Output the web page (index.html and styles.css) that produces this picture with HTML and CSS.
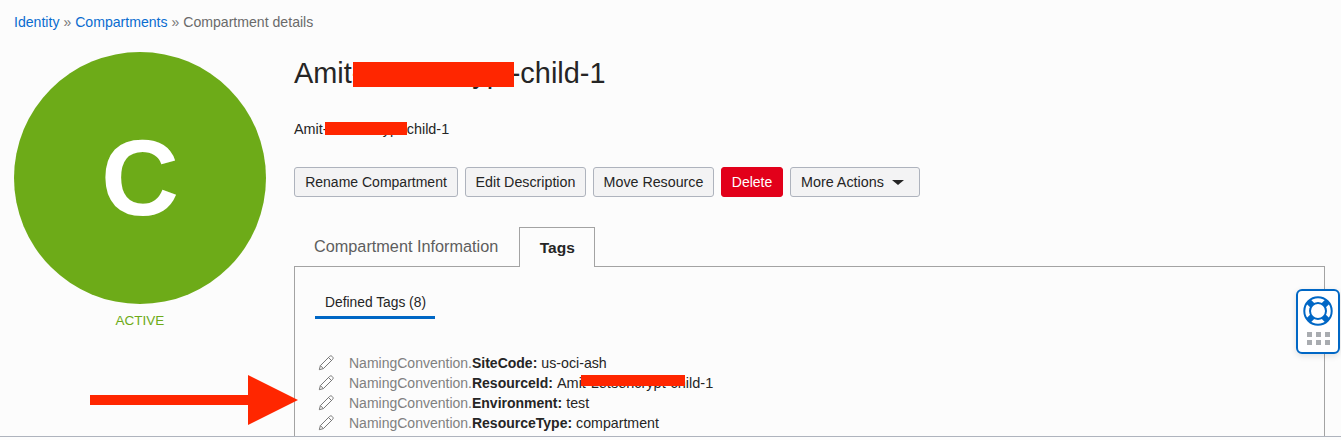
FILE: index.html
```html
<!DOCTYPE html>
<html lang="en">
<head>
<meta charset="utf-8">
<title>Compartment details</title>
<link rel="stylesheet" href="styles.css">
</head>
<body>
<div class="viewport">
  <nav class="crumbs"><a>Identity</a> <span class="sep">»</span> <a>Compartments</a> <span class="sep">»</span> Compartment details</nav>
  <main class="detail">
    <aside class="status">
      <div class="avatar">C</div>
      <div class="state">ACTIVE</div>
    </aside>
    <section class="content">
      <h1 class="title">Amit-Letsencrypt-child-1</h1>
      <p class="desc">Amit-Letsencrypt-child-1</p>
      <div class="actions">
        <button class="btn w-rename">Rename Compartment</button>
        <button class="btn w-edit">Edit Description</button>
        <button class="btn w-move">Move Resource</button>
        <button class="btn danger">Delete</button>
        <button class="btn more">More Actions <i class="caret"></i></button>
      </div>
      <div class="tabs">
        <div class="tab">Compartment Information</div>
        <div class="tab active">Tags</div>
      </div>
      <div class="panel">
        <div class="subtabs"><div class="subtab">Defined Tags (8)</div></div>
        <ul class="tags">
          <li class="tag"><svg class="pencil" viewBox="0 0 16 16"><use href="#pen"/></svg><span class="ns">NamingConvention.</span><b>SiteCode:</b><span class="val">us-oci-ash</span></li>
          <li class="tag"><svg class="pencil" viewBox="0 0 16 16"><use href="#pen"/></svg><span class="ns">NamingConvention.</span><b>ResourceId:</b><span class="val long">Amit-Letsencrypt-child-1</span></li>
          <li class="tag"><svg class="pencil" viewBox="0 0 16 16"><use href="#pen"/></svg><span class="ns">NamingConvention.</span><b>Environment:</b><span class="val">test</span></li>
          <li class="tag"><svg class="pencil" viewBox="0 0 16 16"><use href="#pen"/></svg><span class="ns">NamingConvention.</span><b>ResourceType:</b><span class="val">compartment</span></li>
        </ul>
      </div>
    </section>
  </main>

  <div class="redact r1"></div>
  <div class="redact r2"></div>
  <div class="redact r3"></div>

  <svg class="arrow" viewBox="0 0 208 50"><path d="M0 20H158V0L208 25L158 50V30H0Z" fill="#ff2600"/></svg>

  <div class="help">
    <svg class="buoy" viewBox="0 0 30 30">
      <circle cx="15" cy="15" r="13.7" fill="#fff" stroke="#0067c5" stroke-width="2"/>
      <g stroke="#0067c5" stroke-width="6">
        <path d="M5.6 5.6L10.5 10.5M24.4 5.6L19.5 10.5M5.6 24.4L10.5 19.5M24.4 24.4L19.5 19.5"/>
      </g>
      <circle cx="15" cy="15" r="8" fill="#fff" stroke="#0067c5" stroke-width="2"/>
    </svg>
    <div class="dots"><i></i><i></i><i></i><i></i><i></i><i></i></div>
  </div>
  <div class="baseline"></div>

  <svg class="defs" width="0" height="0"><defs>
    <g id="pen" fill="none" stroke="#777" stroke-width="1" stroke-linejoin="round">
      <path d="M1.3 14.7L2.4 10.6L11.6 1.4C12.3 .7 13.4 .7 14.1 1.4L14.6 1.9C15.3 2.6 15.3 3.7 14.6 4.4L5.4 13.6Z"/>
      <path d="M2.4 10.6L5.4 13.6M10.5 2.5L13.5 5.5"/>
    </g>
  </defs></svg>
</div>
</body>
</html>
```
FILE: styles.css
```css
* { box-sizing: border-box; }
html, body { margin: 0; height: 100%; }
body {
  background: #fcfcfc;
  color: #252525;
  font-family: "Liberation Sans", Arial, sans-serif;
  font-size: 14px;
  overflow: hidden;
}
.viewport { position: relative; width: 1341px; height: 440px; overflow: hidden; }
.crumbs { padding: 14px 0 0 14px; height: 52px; line-height: 16px; font-size: 14.1px; color: #6a6a6a; }
.crumbs a { color: #0a6cd0; }
.sep { color: #777; }
.detail { display: flex; gap: 28px; padding: 0 16px 0 14px; }
.status { width: 252px; flex: none; }
.avatar {
  width: 252px; height: 252px; border-radius: 50%;
  background: #6dab18; color: #fff;
  display: flex; align-items: center; justify-content: center;
  font-size: 108px; font-weight: 700; line-height: 1;
}
.state { margin-top: 8px; text-align: center; color: #6dab18; font-size: 13.5px; line-height: 17px; }
.content { flex: 1; min-width: 0; }
.title { margin: 0; font-size: 28.9px; font-weight: 400; line-height: 42px; color: #252525; }
.desc { margin: 26px 0 0; font-size: 14.4px; line-height: 18px; }
.actions { display: flex; gap: 7px; margin-top: 29px; }
.btn {
  height: 30px; padding: 0 10px;
  border: 1px solid #aeb3bd; border-radius: 3px;
  background: #f3f3f4; color: #252525;
  font: 14px "Liberation Sans", Arial, sans-serif;
  display: flex; align-items: center; justify-content: center; white-space: nowrap;
}
.w-rename { width: 164px; }
.w-edit { width: 121px; font-size: 14.25px; padding: 0; }
.w-move { width: 121px; font-size: 14.25px; padding: 0; }
.btn.danger { background: #e2001a; border-color: #e2001a; color: #fff; width: 62px; padding: 0; }
.btn.more { width: 130px; font-size: 14.35px; padding: 0 0 0 10px; gap: 8px; justify-content: flex-start; }
.caret { width: 0; height: 0; border: 6px solid transparent; border-top: 5px solid #252525; border-bottom: 0; }
.tabs { display: flex; margin-top: 30px; padding-left: 20px; height: 39px; position: relative; z-index: 1; }
.tab { font-size: 16.25px; color: #5e5e5e; line-height: 39px; padding-right: 21px; }
.tab.active {
  background: #fcfcfc; border: 1px solid #a3a3a3; border-bottom: 0;
  color: #252525; font-weight: 700; padding: 0; width: 76px; text-align: center; height: 40px; font-size: 15.5px;
}
.panel { border: 1px solid #a3a3a3; height: 190px; padding: 25px 20px 0; }
.subtabs { display: flex; }
.subtab { width: 120px; height: 27px; padding-left: 10px; line-height: 22px; font-size: 13.8px; border-bottom: 3px solid #0067c5; color: #252525; }
.tags { list-style: none; margin: 34px 0 0; padding: 0 0 0 3px; }
.tag { display: flex; align-items: center; height: 20px; font-size: 14px; white-space: nowrap; }
.ns { color: #808080; }
.tag b { color: #252525; }
.val { margin-left: 4px; font-size: 14.2px; }
.val.long { font-size: 14.5px; }
.pencil { width: 16px; height: 16px; margin-right: 15px; flex: none; }
.redact { position: absolute; background: #ff2600; }
.r1 { left: 353px; top: 62px; width: 161px; height: 25px; }
.r2 { left: 325px; top: 122px; width: 82px; height: 13px; }
.r3 { left: 581px; top: 375px; width: 104px; height: 11px; }
.arrow { position: absolute; left: 90px; top: 375px; width: 208px; height: 50px; }
.help {
  position: absolute; left: 1296px; top: 289px; width: 44px; height: 65px;
  background: #fff; border: 2px solid #0067c5; border-radius: 6px;
  box-shadow: 0 2px 6px rgba(0,0,0,.12);
  display: flex; flex-direction: column; align-items: center;
}
.buoy { width: 30px; height: 30px; margin-top: 5px; }
.dots { display: grid; grid-template-columns: repeat(3, 5px); gap: 3px 4px; margin-top: 6px; }
.dots i { width: 5px; height: 5px; background: #a9acb0; }
.baseline { position: absolute; left: 0; right: 0; top: 436px; height: 4px; background: #fcfcfc; border-top: 1px solid #aeb3bd; }
.defs { position: absolute; }
```
